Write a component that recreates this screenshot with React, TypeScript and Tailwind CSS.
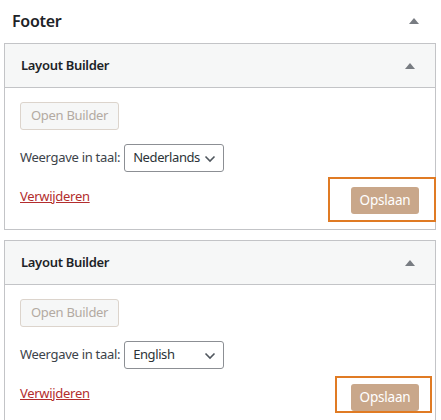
import { useState } from "react";

type Lang = "Nederlands" | "English";

function Caret() {
  return (
    <svg width="10" height="6" viewBox="0 0 10 6" className="fill-[#787c82]">
      <path d="M5 0 L10 6 L0 6 Z" />
    </svg>
  );
}

function LayoutPanel({
  lang,
  highlight,
}: {
  lang: Lang;
  highlight: string;
}) {
  const [value, setValue] = useState<Lang>(lang);
  return (
    <section className="border border-[#c3c4c7] bg-white">
      <header className="flex h-[44px] items-center justify-between border-b border-[#c3c4c7] bg-[#f6f7f7] pl-[16px] pr-[20px]">
        <h3 className="text-[13px] font-semibold tracking-[-0.3px] text-[#1d2327]">Layout Builder</h3>
        <Caret />
      </header>
      <div className="px-[15px] pt-[14px] pb-[15px]">
        <button
          disabled
          className="h-[28px] rounded-[3px] border border-[#dcd4cc] bg-[#f6f7f7] px-[10px] text-[13px] tracking-[-0.3px] text-[#b3aaa2]"
        >
          Open Builder
        </button>
        <div className="mt-[14px] flex items-center gap-[4px] text-[13px] tracking-[-0.3px] text-[#3c434a]">
          <span>Weergave in taal:</span>
          <div className="relative">
            <select
              value={value}
              onChange={(e) => setValue(e.target.value as Lang)}
              className="h-[28px] w-[100px] appearance-none rounded-[3px] border border-[#8c8f94] bg-white pl-[8px] text-[13px] tracking-[-0.4px] text-[#2c3338]"
            >
              <option>Nederlands</option>
              <option>English</option>
            </select>
            <svg
              width="12"
              height="8"
              viewBox="0 0 12 8"
              className="pointer-events-none absolute right-[8px] top-[11px]"
            >
              <path d="M1.5 1.5 L6 6 L10.5 1.5" fill="none" stroke="#50575e" strokeWidth="1.6" />
            </svg>
          </div>
        </div>
        <div className="mt-[15px] flex items-center justify-between">
          <a href="#" className="-translate-y-[4px] text-[13px] tracking-[-0.3px] text-[#b32d2e] underline">
            Verwijderen
          </a>
          <div className="relative mr-[1px]">
            <button className="h-[27px] w-[68px] rounded-[3px] bg-[#c9a78a] text-[13.5px] tracking-[-0.2px] text-white">
              Opslaan
            </button>
            <div className={"pointer-events-none absolute border-2 border-[#e07b24] " + highlight} />
          </div>
        </div>
      </div>
    </section>
  );
}

export default function App() {
  return (
    <div className="h-[420px] w-[441px] overflow-hidden bg-white font-['Noto_Sans',sans-serif]">
      <div className="flex h-[43px] items-center justify-between pl-[12px] pr-[22px] pb-[2px]">
        <h2 className="text-[16px] font-semibold tracking-[-0.3px] text-[#1d2327]">Footer</h2>
        <Caret />
      </div>
      <div className="flex flex-col gap-[10px] pl-[4px] pr-[5px]">
        <LayoutPanel lang="Nederlands" highlight="-left-[23px] -right-[17px] -top-[10px] -bottom-[8px]" />
        <LayoutPanel lang="English" highlight="-left-[16px] -right-[13px] -top-[8px] -bottom-[2px]" />
      </div>
    </div>
  );
}
